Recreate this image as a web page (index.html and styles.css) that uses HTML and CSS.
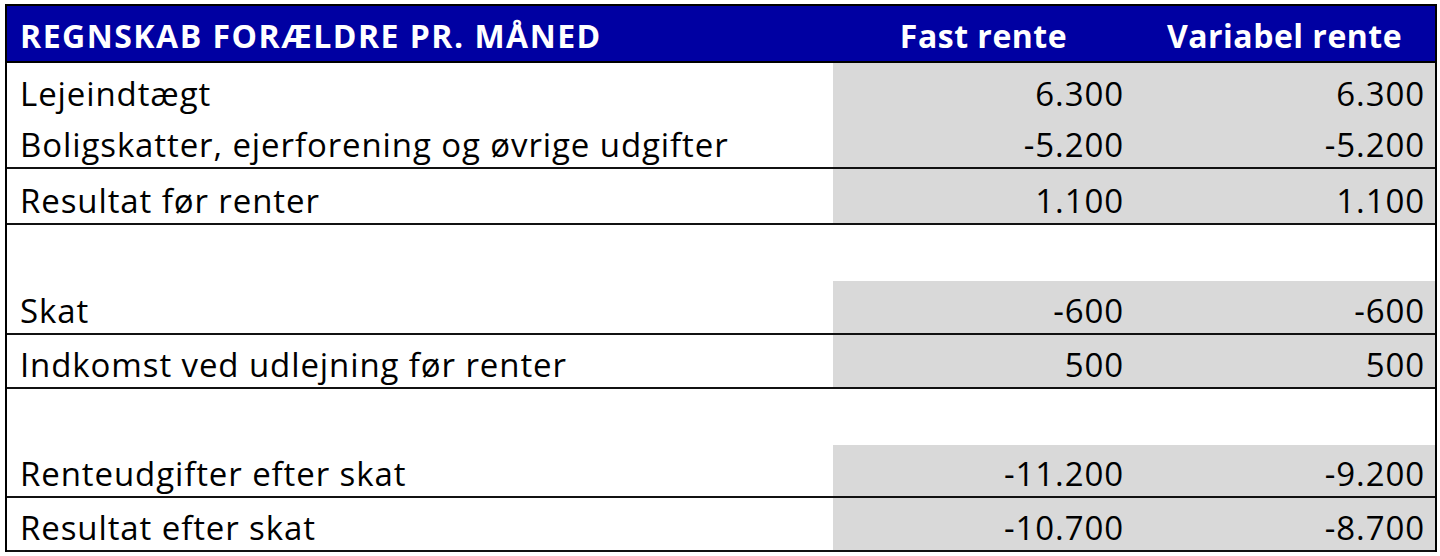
FILE: index.html
```html
<!DOCTYPE html>
<html lang="da">
<head>
<meta charset="utf-8">
<title>Regnskab forældre pr. måned</title>
<link rel="stylesheet" href="styles.css">
</head>
<body>
<div class="sheet">
  <div class="row head">
    <div class="cell label">REGNSKAB FORÆLDRE PR. MÅNED</div>
    <div class="cell hcol">Fast rente</div>
    <div class="cell hcol">Variabel rente</div>
  </div>
  <div class="row r56 first">
    <div class="cell label">Lejeindtægt</div>
    <div class="cell num">6.300</div>
    <div class="cell num">6.300</div>
  </div>
  <div class="row r50 line">
    <div class="cell label">Boligskatter, ejerforening og øvrige udgifter</div>
    <div class="cell num">-5.200</div>
    <div class="cell num">-5.200</div>
  </div>
  <div class="row r56 line">
    <div class="cell label">Resultat før renter</div>
    <div class="cell num">1.100</div>
    <div class="cell num">1.100</div>
  </div>
  <div class="row r56 blank">
    <div class="cell label"></div>
    <div class="cell"></div>
    <div class="cell"></div>
  </div>
  <div class="row r54 line">
    <div class="cell label">Skat</div>
    <div class="cell num">-600</div>
    <div class="cell num">-600</div>
  </div>
  <div class="row r54 line">
    <div class="cell label">Indkomst ved udlejning før renter</div>
    <div class="cell num">500</div>
    <div class="cell num">500</div>
  </div>
  <div class="row r56 blank">
    <div class="cell label"></div>
    <div class="cell"></div>
    <div class="cell"></div>
  </div>
  <div class="row r53 line">
    <div class="cell label">Renteudgifter efter skat</div>
    <div class="cell num">-11.200</div>
    <div class="cell num">-9.200</div>
  </div>
  <div class="row r54 line">
    <div class="cell label">Resultat efter skat</div>
    <div class="cell num">-10.700</div>
    <div class="cell num">-8.700</div>
  </div>
</div>
</body>
</html>
```
FILE: styles.css
```css
html, body {
  margin: 0;
  padding: 0;
  background: #ffffff;
}
body {
  padding: 4px 0 0 5px;
  font-family: "Open Sans", Lato, sans-serif;
  color: #000000;
}
.sheet {
  width: 1428px;
  border: 2px solid #000000;
  border-bottom: none;
  display: flex;
  flex-direction: column;
}
.row {
  display: grid;
  grid-template-columns: 826px 301px 301px;
  box-sizing: border-box;
}
.row.line {
  border-bottom: 2px solid #111111;
}
.head {
  height: 57px;
  background: #0000a2;
  border-bottom: 2px solid #000000;
  color: #ffffff;
  font-weight: 700;
}
.r56 { height: 56px; }
.r50 { height: 50px; }
.r54 { height: 54px; }
.r53 { height: 53px; }
.cell {
  display: flex;
  align-items: flex-end;
  padding-bottom: 6px;
  box-sizing: border-box;
  font-size: 33px;
  letter-spacing: 0.9px;
  line-height: 1;
}
.first .cell {
  padding-bottom: 9px;
}
.head .cell {
  font-size: 32px;
  letter-spacing: 1.5px;
  align-items: center;
  padding-bottom: 0;
  padding-top: 5px;
}
.head .hcol {
  letter-spacing: 0.5px;
}
.label {
  padding-left: 13px;
}
.num {
  justify-content: flex-end;
  padding-right: 10px;
  background: #d9d9d9;
}
.hcol {
  justify-content: center;
}
```
